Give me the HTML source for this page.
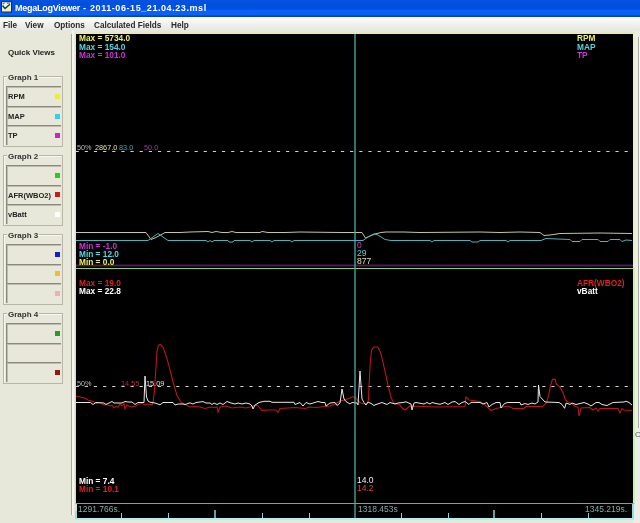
<!DOCTYPE html>
<html><head><meta charset="utf-8">
<style>
*{margin:0;padding:0;box-sizing:border-box}
html,body{width:640px;height:523px;overflow:hidden;background:#E8E8DA;font-family:"Liberation Sans",sans-serif}
.a{position:absolute}
#title{left:0;top:0;width:640px;height:17px;background:linear-gradient(#0A54DE 0,#0050E0 3px,#0250E2 9px,#0A60F4 10.5px,#0A62F5 15px,#0848C8 15.6px,#003CA8 17px)}
.ttxt{left:15px;top:3px;color:#fff;font-weight:bold;font-size:9px;line-height:11px;white-space:nowrap}
#menu{left:0;top:17px;width:640px;height:14px;background:linear-gradient(#FFFFFF,#F2F2EE 6px,#E6E6E2 14px)}
.mi{top:21px;font-size:8.2px;font-weight:bold;color:#2a2a2a;line-height:10px;white-space:nowrap}
.lbl{font-weight:bold;font-size:7.5px;color:#222;line-height:9px;white-space:nowrap}
.gb{border:1px solid #B8B6A6;box-shadow:inset 1px 1px 0 #F8F8F2}
.gt{background:#E8E8DA;font-size:8px;font-weight:bold;color:#333;line-height:10px;padding:0 1px;white-space:nowrap}
.btn{left:6px;width:55px;height:20px;border-top:1px solid #8A897C;border-left:1px solid #8A897C;box-shadow:inset 1px 1px 0 #BDBCAE;background:#E8E8DA}
.sq{width:5px;height:5px}
.t{white-space:nowrap;line-height:8px}
.bt{font-weight:bold;font-size:9.5px;transform:scaleX(0.875);transform-origin:0 0}
.nt{font-size:8px}
body>*{filter:blur(0.3px)}
</style></head><body>
<div id="title" class="a"></div>
<svg class="a" style="left:0;top:0" width="14" height="15" viewBox="0 0 14 15">
 <rect x="1" y="1.5" width="11" height="11" fill="#0A2A80"/>
 <rect x="2" y="2.5" width="9" height="9" fill="#F6F0B0"/>
 <rect x="2" y="2.5" width="9" height="3" fill="#F0F8F0"/>
 <path d="M2.5 4 L4.5 3.2" stroke="#D04030" stroke-width="1.2"/>
 <path d="M7 3.2 L10 3" stroke="#40C040" stroke-width="1.4"/>
 <path d="M2.5 5.5 L5 8.5 L10 4.2" stroke="#1A3050" stroke-width="1.4" fill="none"/>
 <path d="M4 6 L5 7" stroke="#90D8F0" stroke-width="1"/>
</svg>
<div class="a ttxt" style="letter-spacing:-0.25px">MegaLogViewer</div>
<div class="a ttxt" style="left:83px">-</div>
<div class="a ttxt" style="left:90px;letter-spacing:0.57px">2011-06-15_21.04.23.msl</div>
<div id="menu" class="a"></div>
<div class="a mi" style="left:3px">File</div>
<div class="a mi" style="left:25px">View</div>
<div class="a mi" style="left:54px">Options</div>
<div class="a mi" style="left:94px">Calculated Fields</div>
<div class="a mi" style="left:171px">Help</div>

<!-- left panel -->
<div class="a lbl" style="left:8px;top:48px;font-size:8px">Quick Views</div>

<div class="a gb" style="left:3px;top:76px;width:60px;height:71px"></div>
<div class="a gt" style="left:7px;top:73px">Graph 1</div>
<div class="a btn" style="top:86px"></div>
<div class="a btn" style="top:106px"></div>
<div class="a btn" style="top:125px"></div>
<div class="a lbl" style="left:8px;top:92px">RPM</div>
<div class="a lbl" style="left:8px;top:112px">MAP</div>
<div class="a lbl" style="left:8px;top:131px">TP</div>
<div class="a sq" style="left:55px;top:94px;background:#F0F020"></div>
<div class="a sq" style="left:55px;top:114px;background:#30D0E8"></div>
<div class="a sq" style="left:55px;top:133px;background:#D020D0"></div>

<div class="a gb" style="left:3px;top:155px;width:60px;height:71px"></div>
<div class="a gt" style="left:7px;top:152px">Graph 2</div>
<div class="a btn" style="top:165px"></div>
<div class="a btn" style="top:185px"></div>
<div class="a btn" style="top:204px"></div>
<div class="a lbl" style="left:8px;top:191px">AFR(WBO2)</div>
<div class="a lbl" style="left:8px;top:210px">vBatt</div>
<div class="a sq" style="left:55px;top:173px;background:#20D020"></div>
<div class="a sq" style="left:55px;top:192px;background:#D01818"></div>
<div class="a sq" style="left:55px;top:212px;background:#FFFFFF"></div>

<div class="a gb" style="left:3px;top:234px;width:60px;height:71px"></div>
<div class="a gt" style="left:7px;top:231px">Graph 3</div>
<div class="a btn" style="top:244px"></div>
<div class="a btn" style="top:264px"></div>
<div class="a btn" style="top:283px"></div>
<div class="a sq" style="left:55px;top:252px;background:#1020D0"></div>
<div class="a sq" style="left:55px;top:271px;background:#F0C020"></div>
<div class="a sq" style="left:55px;top:291px;background:#F0B0B0"></div>

<div class="a gb" style="left:3px;top:313px;width:60px;height:71px"></div>
<div class="a gt" style="left:7px;top:310px">Graph 4</div>
<div class="a btn" style="top:323px"></div>
<div class="a btn" style="top:343px"></div>
<div class="a btn" style="top:362px"></div>
<div class="a sq" style="left:55px;top:331px;background:#20A020"></div>
<div class="a sq" style="left:55px;top:370px;background:#A01010"></div>

<!-- splitter -->
<div class="a" style="left:71px;top:34px;width:1px;height:481px;background:#A8A79A"></div>
<div class="a" style="left:72px;top:31px;width:2px;height:484px;background:#F6F5EE"></div>

<!-- right strip -->
<div class="a" style="left:633px;top:31px;width:7px;height:492px;background:#EDEDE8"></div>
<div class="a" style="left:638px;top:37px;width:1px;height:391px;background:#A8A8A0"></div>
<div class="a" style="left:639px;top:37px;width:1px;height:391px;background:#FAFAF8"></div>
<div class="a" style="left:635px;top:431px;font-size:8px;color:#555;line-height:8px">C</div>

<!-- graph area -->
<div class="a" style="left:75px;top:32px;width:560px;height:236px;background:#000;border-top:2px solid #E8E8B8;border-left:1px solid #E0E8B0;border-right:2px solid #E8F0C8"></div>
<div class="a" style="left:75px;top:268px;width:560px;height:236px;background:#000;border-top:1px solid #98D070;border-left:1px solid #C0E8A8;border-right:2px solid #C8F0B8;border-bottom:1px solid #7AB060"></div>
<div class="a" style="left:75px;top:504px;width:559px;height:16px;background:#000;border-left:2px solid #C0F0D8;border-bottom:2px solid #B0F0F0;border-right:2px solid #90E0E0"></div>
<div class="a" style="left:75px;top:511px;width:2px;height:8px;background:#90E0E8"></div>

<svg class="a" style="left:0;top:0" width="640" height="523" viewBox="0 0 640 523">
 <line x1="75.6" y1="151.5" x2="632" y2="151.5" stroke="#D0D0D0" stroke-width="1" stroke-dasharray="3.2,5.95"/>
 <line x1="75.6" y1="386.5" x2="632" y2="386.5" stroke="#D0D0D0" stroke-width="1" stroke-dasharray="3.2,5.95"/>
 <line x1="76" y1="265.5" x2="633" y2="265.5" stroke="#4C1A5A" stroke-width="2"/>
 <polyline fill="none" stroke="#C8C890" stroke-width="1" points="76,232.5 146,232.5 151,239.5 156,237.5 165,232.5 180,232.5 190,232 208,231.5 212,232.5 216,231.5 222,232.5 228,232.5 232,231.5 236,232.5 260,232.5 262,231.5 268,232.5 285,232.5 300,232 340,232.5 362,232.5 365.5,238 370,236 375,234 381,232.5 386,232 404,232 420,232.5 480,232 500,232.5 520,232 540,232.5 544,235.5 550,235 560,233.5 600,233 632,233.5"/>
 <polyline fill="none" stroke="#50B0B8" stroke-width="1" points="76,240.5 148,240.5 158,233.5 168,240.5 206,240.5 208,242 210,240.5 212,242 214,240.5 228,240.5 229,242 233,242 234,240.5 250,240.5 252,242 254,240.5 270,240.5 272,242 274,240.5 290,240.5 292,242 294,240.5 330,240.5 363,240.5 368,237 374,233.8 378,235 385,239.5 391,240.5 430,240.5 432,242 434,240.5 470,240.5 472,242 478,242 480,240.5 506,240.5 508,242 510,240.5 541,240.5 546,238.5 570,239.5 572,241.5 580,241.5 582,239.5 598,239.5 600,241.5 608,241.5 610,239.5 620,239.5 622,241.5 626,240 632,240.5"/>
 <polyline fill="none" stroke="#B81818" stroke-width="1.1" points="76,396 86,398.5 88,400 93,401.4 97,403.5 100,402.5 104,405 106,404.6 110,406 112,405.2 114,408 116,406.5 118,407 120,404 122,406 124,403.5 125,409 127,405 129,406 132,407 136,406 139,404 142,403.5 145,405 148,404 152,405 153,402.2 154.4,391.5 155.7,371.4 157,351.4 158.4,345.4 160.4,344.4 163,347.4 166.4,356.7 169.7,368.7 173,382 177,395.5 181,402.2 186,405 190,407 196,406.5 200,407 205,408.5 210,407 215,407.5 217,407 218,412 220,407 226,406 232,408 240,407 246,408 250,407 256,405 258,406 262,410.4 270,410 276,410 278,412.5 280,408.5 288,408 295,407.5 300,408 305,408.5 310,407 316,407.5 330,406 335,404 340,401 345,400 350,398 353,396.5 356,398 358,401 361,403 364,404 367,403.5 368.4,400.2 369.3,380.2 370.4,360 371.7,350 373.7,347 377.7,347 380.4,352 383.1,362.8 385.8,374.8 388.4,386.9 391.1,397.6 393.8,403 400,405 402,408 405,410 410,406 436,407 465,406.5 466,397 469,400 480,401.5 485,405 489,408.5 491,410.5 496,408.5 508,406 510,407 513,408.5 524,408.5 526,406.5 542.7,406.5 546.6,402.8 549,393.4 551,384 552.5,379.4 555.2,379.4 556.4,384 559.9,387.2 563,392.7 565.4,399.7 567,401.25 571.6,403.6 574.75,406 578,407.5 579,416 581,408 590,407.5 593,410 596,408 598,411 600,408.5 618,408.5 620,413 622,408.5 624,410 632,410.5"/>
 <polyline fill="none" stroke="#E8E8E8" stroke-width="1" points="76,402.5 90.5,402.5 93,404.5 96,402.5 104,403 106,404.5 109,403 112,401.5 114,403 122,403 125,401.5 128,402 132,402 135,404.5 138,402.5 144,402.5 145,376 146.5,397 148,401 150,402.2 155,403 160,404.8 163,402.5 173,402.5 175,405 178,404 183,404 185,404.5 190,402.8 193,404 196,402.5 203,401.6 206,403 210,403 212,404.5 214,403 217,404.5 220,403 223,404.5 227,401.5 231,403 235,404 238,403 242,404 246,403 250,404 252,406 253,409 255,405 256,404.5 259,402.5 264,401.3 270,401.3 272,402.3 294,402.3 295,404.5 300,402.5 303,406 306,402.5 310,404 318,401.5 322,402.5 325,402.5 326,406 330,403 335,402.5 337,405.5 340,403 342,389 344,399 346,401.5 350,404 352,402.5 357,403 358,405 360,371 362,399 364,402.5 366,405 368,402 372,404 374,405.5 376,404.5 382,402.5 387,404.5 390,402.5 395,404 398,403 403,402.5 406,401.8 411,404 412,410 414,403 416,402.5 424,404 427,402.5 430,404 432,402.5 436,403.5 440,404.3 445,402.5 448,404.5 452,402 455,401.5 459,404.5 462,402.5 465,401.5 469,404.5 471,402.3 480,402.5 483,404 487,402.5 489,407 492,404.5 496,402.5 500,402.5 501,408 504,404 506,403 508,402.5 520,402.5 521,405 525,403.5 528,404.5 532,403 535,404 538,402 538.5,385 540,396.6 545,402 559,402.5 562,404.5 564.6,408.3 566.2,403 570,404.5 572,403 576,404.5 580,403.5 584,402.5 588,404 591,406 596,402.5 599,402.5 602,404.5 607,405.5 611,403.5 613,402.5 624,402 626,401.2 629,402.5 632,405"/>
 <line x1="355" y1="34" x2="355" y2="518" stroke="#4AACAC" stroke-width="1.3"/>
 <g stroke="#80D8D8" stroke-width="1">
  <line x1="121.5" y1="513" x2="121.5" y2="518"/>
  <line x1="168.5" y1="513" x2="168.5" y2="518"/>
  <line x1="215" y1="510" x2="215" y2="518" stroke-width="1.5"/>
  <line x1="262.5" y1="513" x2="262.5" y2="518"/>
  <line x1="309.5" y1="513" x2="309.5" y2="518"/>
  <line x1="401.5" y1="513" x2="401.5" y2="518"/>
  <line x1="448.5" y1="513" x2="448.5" y2="518"/>
  <line x1="494" y1="510" x2="494" y2="518" stroke-width="1.5"/>
  <line x1="541.5" y1="513" x2="541.5" y2="518"/>
  <line x1="588.5" y1="513" x2="588.5" y2="518"/>
 </g>
</svg>

<!-- top graph texts -->
<div class="a t bt" style="left:79px;top:34px;color:#F0F060">Max = 5734.0</div>
<div class="a t bt" style="left:79px;top:43px;color:#50D8E8">Max = 154.0</div>
<div class="a t bt" style="left:79px;top:51px;color:#D030D8">Max = 101.0</div>
<div class="a t bt" style="left:577px;top:34px;color:#F0F060">RPM</div>
<div class="a t bt" style="left:577px;top:43px;color:#50D8E8">MAP</div>
<div class="a t bt" style="left:577px;top:51px;color:#D030D8">TP</div>
<div class="a t nt" style="left:77px;top:144px;font-size:7.3px;color:#B8B8B8">50%</div>
<div class="a t nt" style="left:95px;top:144px;font-size:7.3px;color:#E0E0A0">2867.0</div>
<div class="a t nt" style="left:119px;top:144px;font-size:7.3px;color:#40A8B8">83.0</div>
<div class="a t nt" style="left:144px;top:144px;font-size:7.3px;color:#A830B0">50.0</div>
<div class="a t bt" style="left:79px;top:241.6px;color:#D030D8">Min = -1.0</div>
<div class="a t bt" style="left:79px;top:249.6px;color:#50D8E8">Min = 12.0</div>
<div class="a t bt" style="left:79px;top:257.6px;color:#F0F060">Min = 0.0</div>
<div class="a t nt" style="left:357px;top:241px;font-size:8.5px;color:#D040D0">0</div>
<div class="a t nt" style="left:357px;top:249px;font-size:8.5px;color:#70C8D0">29</div>
<div class="a t nt" style="left:357px;top:257px;font-size:8.5px;color:#E0E0A0">877</div>

<!-- bottom graph texts -->
<div class="a t bt" style="left:79px;top:279px;color:#E02020">Max = 19.0</div>
<div class="a t bt" style="left:79px;top:287px;color:#FFFFFF">Max = 22.8</div>
<div class="a t bt" style="left:577px;top:279px;color:#E02020">AFR(WBO2)</div>
<div class="a t bt" style="left:577px;top:287px;color:#FFFFFF">vBatt</div>
<div class="a t nt" style="left:77px;top:380px;font-size:7.3px;color:#B8B8B8">50%</div>
<div class="a t nt" style="left:121px;top:380px;font-size:7.3px;color:#C02828">14.55</div>
<div class="a t nt" style="left:146px;top:380px;font-size:7.3px;color:#E0E0E0">15.09</div>
<div class="a t bt" style="left:79px;top:476.6px;color:#FFFFFF">Min = 7.4</div>
<div class="a t bt" style="left:79px;top:484.6px;color:#E02020">Min = 10.1</div>
<div class="a t nt" style="left:357px;top:476px;font-size:8.5px;color:#F0F0F0">14.0</div>
<div class="a t nt" style="left:357px;top:484px;font-size:8.5px;color:#E04040">14.2</div>
<div class="a t nt" style="left:78px;top:505px;font-size:8.5px;color:#88A8A8">1291.766s.</div>
<div class="a t nt" style="left:358px;top:505px;font-size:8.5px;color:#88A8A8">1318.453s</div>
<div class="a t nt" style="left:585px;top:505px;font-size:8.5px;color:#88A8A8">1345.219s.</div>
</body></html>
